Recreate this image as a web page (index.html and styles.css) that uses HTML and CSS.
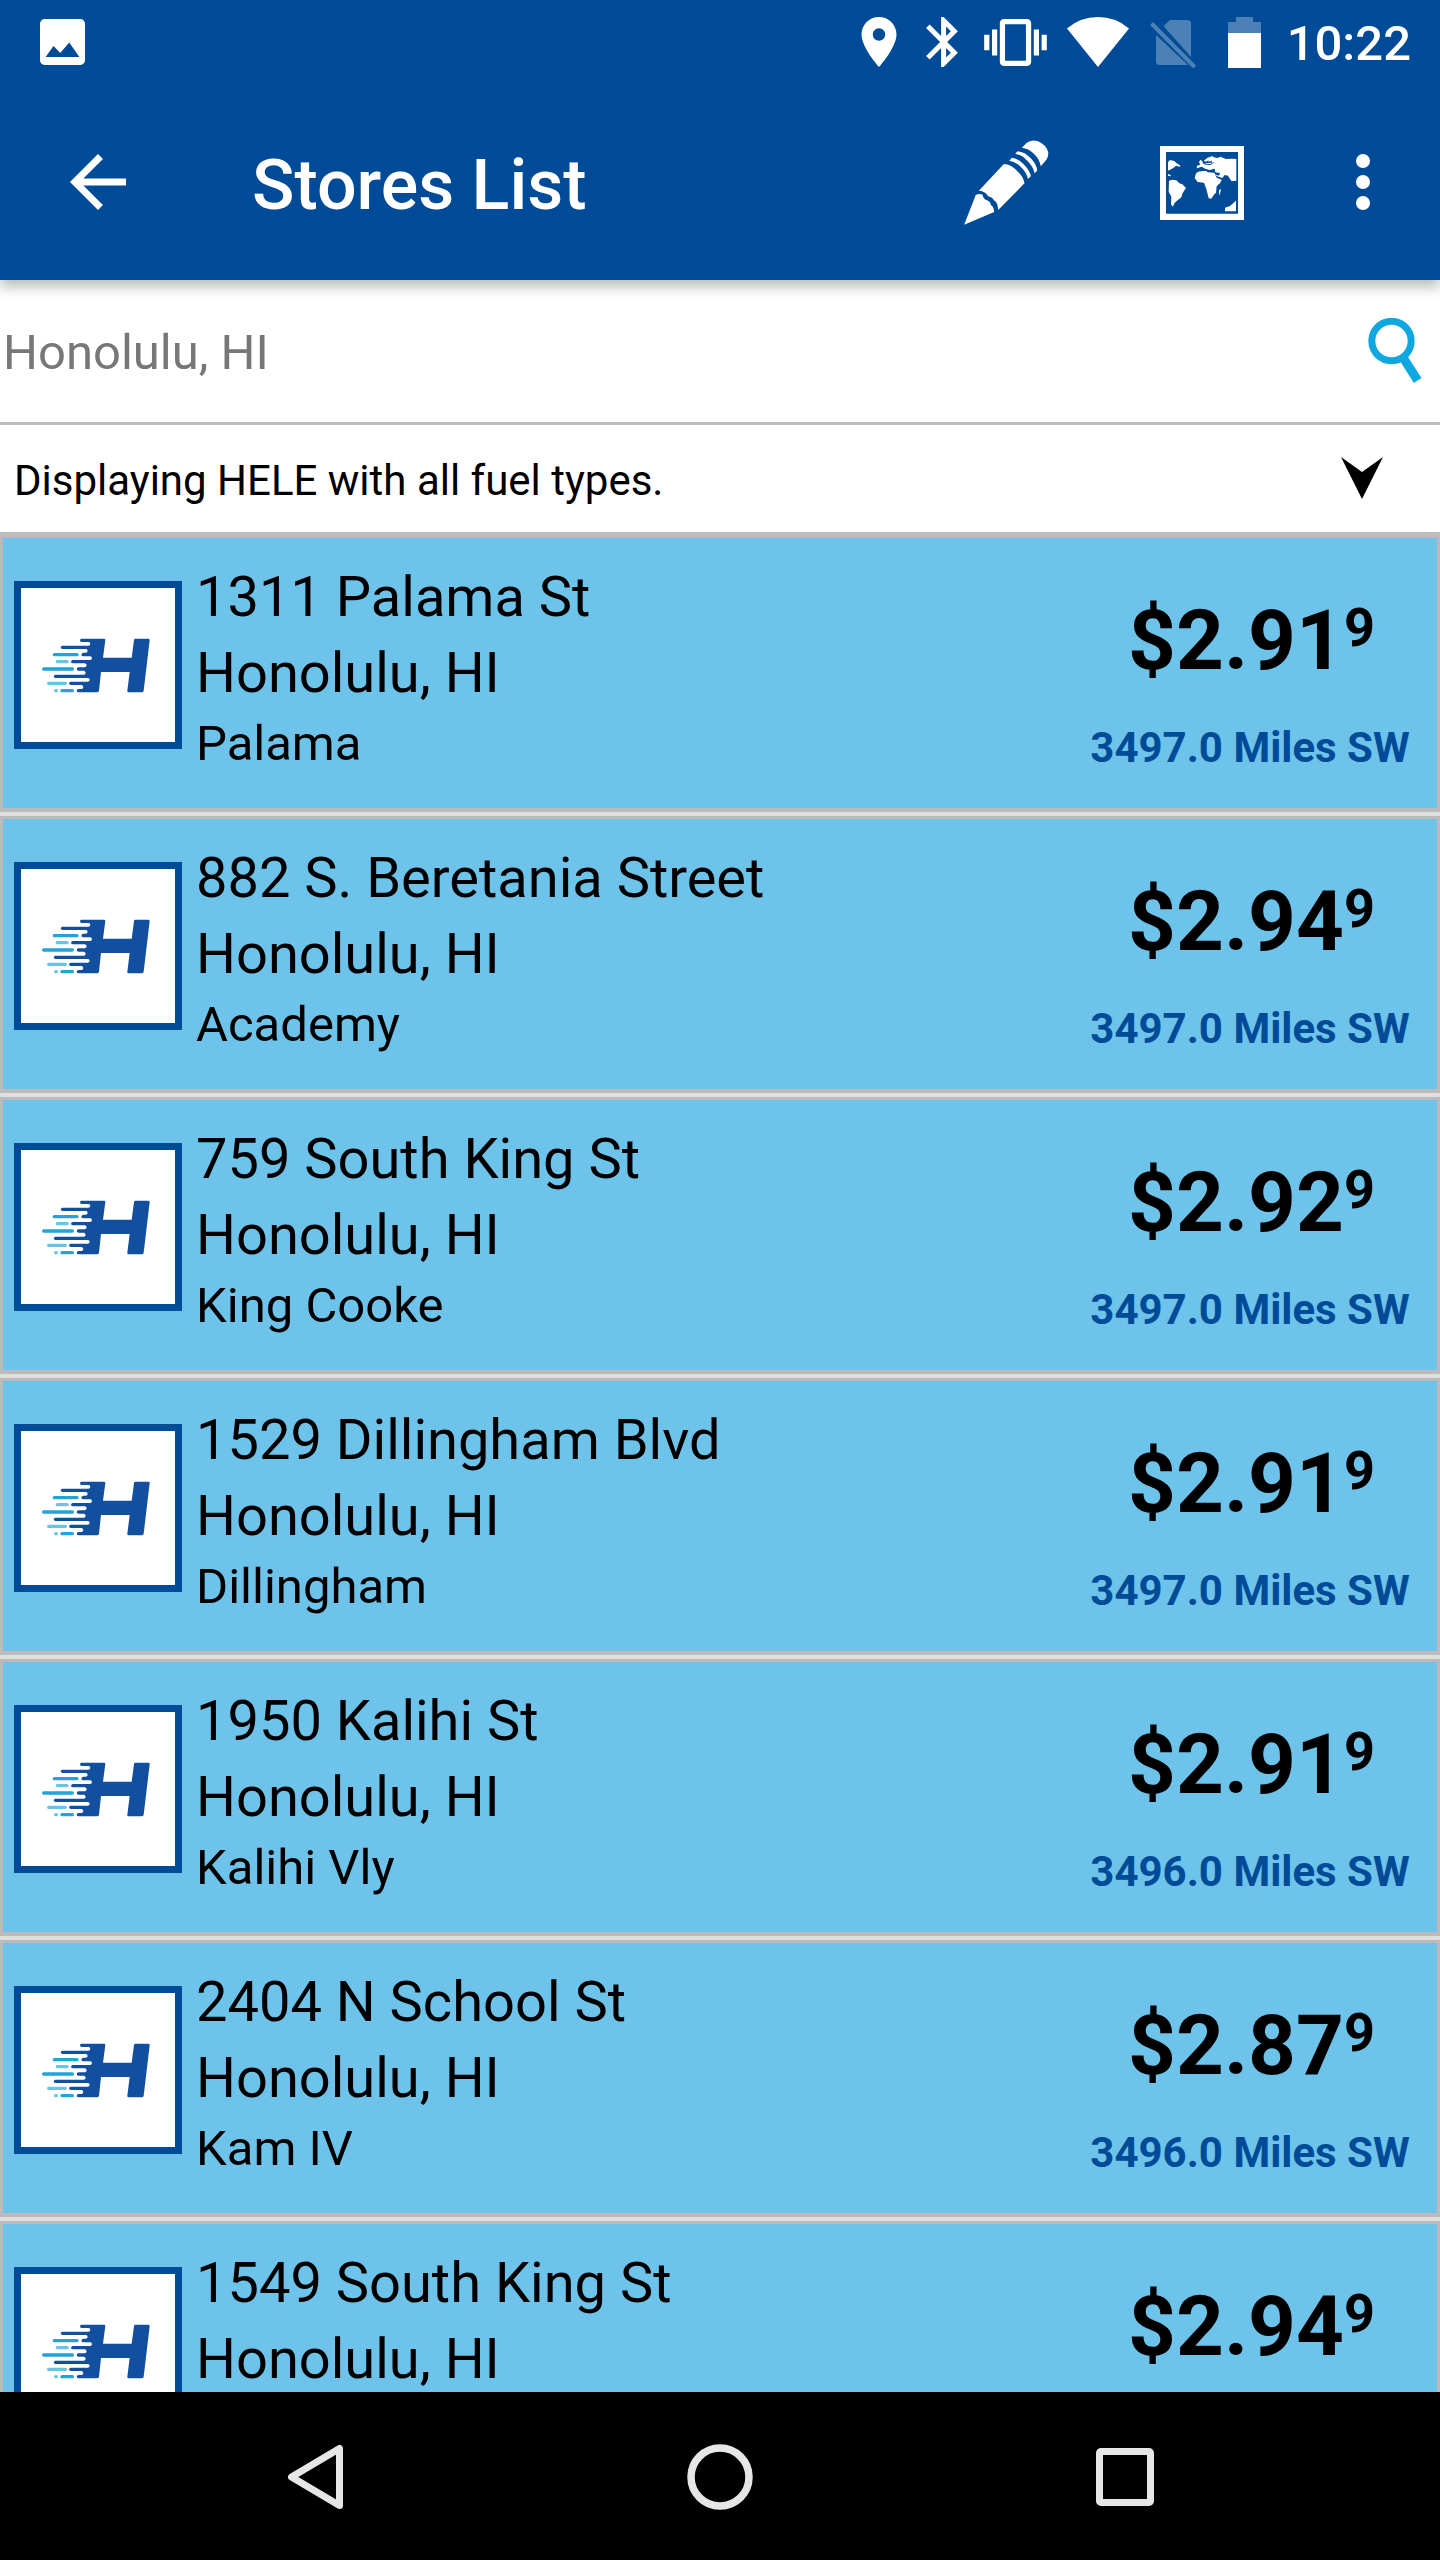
FILE: index.html
```html
<!DOCTYPE html>
<html lang="en">
<head>
  <meta charset="UTF-8">
  <title>Stores List</title>
  <link rel="stylesheet" href="styles.css">
</head>
<body>
  <!-- Brand logo, reused by every store row -->
  <svg class="defs" width="0" height="0">
    <symbol id="logo" viewBox="63 84 462 462">
      <path fill="#134f9f" d="M244 236H312Q316 236 316 240L309 293H395L402 240Q402 236 407 236H445Q450 236 449 241L431 392Q430 397 425 397H386Q381 397 382 392L389 336H303L297 392Q296 397 291 397H235Q230 396 230 392Q231 387 235 387H245Q250 386 250 381Q249 376 245 375H212Q207 374 207 370Q208 366 212 365H264Q269 364 269 359Q268 355 264 354H166Q161 353 161 349Q162 344 166 344H252Q257 343 257 338Q256 333 252 332H235Q230 331 230 327Q231 322 235 322H255Q260 321 260 316Q259 311 255 310H218Q213 309 213 305Q214 301 218 300H271Q276 299 276 294Q275 290 271 289H249Q244 288 244 284Q245 279 249 278H258Q263 277 263 272Q262 268 258 267H187Q182 266 182 262Q183 258 187 257H266Q271 256 271 251Q270 247 266 246H244Q240 245 240 241Q240 236 244 236Z"/>
      <g fill="#22a4da">
        <rect x="158" y="279" width="78" height="10" rx="5"/>
        <rect x="126" y="322" width="96" height="10" rx="5"/>
        <rect x="181" y="387" width="41" height="10" rx="5"/>
      </g>
      <g fill="#6bc3e3">
        <rect x="167" y="300" width="39" height="10" rx="5"/>
        <rect x="141" y="365" width="60" height="10" rx="5"/>
        <rect x="162" y="387" width="12" height="10" rx="5"/>
      </g>
    </symbol>
  </svg>

  <div class="screen">
    <header class="header">
      <!-- Status bar -->
      <div class="status-bar">
        <svg class="icon-picture" width="45" height="46" viewBox="0 0 40 46" preserveAspectRatio="none">
          <path fill="#fff" fill-rule="evenodd" d="M4 0h32a4 5 0 0 1 4 5v36a4 5 0 0 1-4 5H4a4 5 0 0 1-4-5V5a4 5 0 0 1 4-5zM5 38h30L26 23.500 18 34 12 27z"/>
        </svg>
        <div class="status-icons">
          <svg class="icon-location" width="36" height="50" viewBox="5 2 14 20">
            <path fill="#fff" d="M12 2C8.130 2 5 5.130 5 9c0 5.250 7 13 7 13s7-7.750 7-13c0-3.870-3.130-7-7-7zm0 9.500a2.500 2.500 0 1 1 0-5 2.500 2.500 0 0 1 0 5z"/>
          </svg>
          <svg class="icon-bluetooth" width="32" height="50" viewBox="5 2 12.710 20">
            <path fill="#fff" d="M17.710 7.710L12 2h-1v7.590L6.410 5 5 6.410 10.590 12 5 17.590 6.410 19 11 14.410V22h1l5.710-5.710-4.300-4.290 4.300-4.290zM13 5.830l1.880 1.880L13 9.590V5.830zm1.880 10.460L13 18.170v-3.760l1.880 1.880z"/>
          </svg>
          <svg class="icon-vibrate" width="63" height="47" viewBox="0 3 24 18">
            <path fill="#fff" d="M0 15h2V9H0v6zm3 2h2V7H3v10zm19-8v6h2V9h-2zm-3 8h2V7h-2v10zM16.500 3h-9C6.670 3 6 3.670 6 4.500v15c0 .83.67 1.500 1.500 1.500h9c.83 0 1.500-.67 1.500-1.500v-15c0-.83-.67-1.500-1.500-1.500zM16 19H8V5h8v14z"/>
          </svg>
          <svg class="icon-wifi" width="62" height="50" viewBox="0 0 62 50">
            <path fill="#fff" d="M31 50L0 11.500Q13 0 31 0T62 11.500z"/>
          </svg>
          <!-- No SIM: card with a gap on the lower side of the slash -->
          <svg class="icon-sim" width="46" height="49" viewBox="0 0 46 49">
            <path fill="#4d81b5" d="M20 0H37Q41 0 41 4V37L13.500 6zM6 15L38 45H10Q6 45 6 41zM3 2L46 45.500 43.200 48.500 0 5z"/>
          </svg>
          <svg class="icon-battery" width="33" height="51" viewBox="0 0 33 51">
            <path fill="#4d81b5" d="M8 0h17v5h8v12H0V5h8z"/>
            <path fill="#fff" d="M0 16h33v35H0z"/>
          </svg>
          <span class="clock">10:22</span>
        </div>
      </div>

      <!-- Toolbar -->
      <div class="toolbar">
        <svg class="icon-back" width="56" height="56" viewBox="4 4 16 16">
          <path fill="#fff" d="M20 11H7.830l5.590-5.590L12 4l-8 8 8 8 1.410-1.410L7.830 13H20v-2z"/>
        </svg>
        <h1 class="title">Stores List</h1>
        <svg class="icon-edit" width="85" height="85" viewBox="132 88 254 255">
          <g fill="#fff">
            <path d="M132 342L167 252Q180 248 187 252Q189 264 200 269Q211 272 212 283Q221 288 222 304z"/>
            <path d="M176 240L251 160Q272 160 291 181Q310 198 313 218L234 298Q233 275 221 269Q218 260 204 257Q197 242 176 240z"/>
            <path d="M267 150L275 141Q294 143 312 162Q330 181 332 197L323 205Q320 186 302 169Q285 152 267 150z"/>
            <path d="M285 130L292 122Q314 124 332 143Q350 163 351 180L343 188Q340 168 321 150Q304 132 285 130z"/>
            <path d="M305 111L319 97Q334 85 354 92Q377 102 384 124Q386 137 378 148L362 167Q358 145 341 129Q325 113 305 111z"/>
          </g>
        </svg>
        <svg class="icon-map" width="84" height="74" viewBox="60 47 252 222">
          <g fill="#fff">
            <path fill-rule="evenodd" d="M60 47H312V269H60zM78 65V250H294V65z"/>
            <path d="M84 95L90 89 103 92 108 97 122 106 119 109 108 106 101 112 96 115 84 121z"/>
            <path d="M84 131L92 134 92 138 84 136z"/>
            <path d="M87 151L97 148 109 150 118 159 127 162 138 173 128 188 124 201 111 211 103 219 99 229 93 222 94 199 86 184z"/>
            <path d="M168 129Q174 123 184 123L198 121 203 126 223 127 230 142 245 148 241 157 230 168 228 187 221 194 214 205 206 204 199 176 192 157 173 155 164 143z"/>
            <path d="M237 180L242 176 242 184 237 196z"/>
            <path d="M170 115L171 106 181 103 177 96 181 88 187 93 190 101 201 98 215 97 216 91 205 94 206 90 198 94 191 91 203 82 217 77 221 81 233 83 241 79 258 86 277 85 289 86 289 151 275 153 268 143 264 136 254 134 247 143 231 138 224 132 236 136 241 129 226 126 224 116 209 119 195 115 186 109z"/>
            <path d="M255 232L270 227 288 211V243H255z"/>
          </g>
          <path fill="none" stroke="#004b97" stroke-width="3" d="M168 116L183 112 195 119 210 122 224 117M193 101L211 103 221 96"/>
        </svg>
        <svg class="icon-more" width="14" height="56" viewBox="0 0 14 56">
          <g fill="#fff">
            <circle cx="7" cy="7" r="7"/>
            <circle cx="7" cy="28" r="7"/>
            <circle cx="7" cy="49" r="7"/>
          </g>
        </svg>
      </div>
    </header>

    <!-- Search -->
    <div class="search-bar">
      <span class="search-text">Honolulu, HI</span>
      <svg class="icon-search" width="54" height="65" viewBox="505 143 161 195">
        <circle cx="575" cy="212" r="59" fill="none" stroke="#0ea7e0" stroke-width="21"/>
        <path fill="#0ea7e0" d="M599 270L624 259 665 323 642 338z"/>
      </svg>
    </div>

    <!-- Filter -->
    <div class="filter-bar">
      <span class="filter-text">Displaying HELE with all fuel types.</span>
      <svg class="icon-down" width="42" height="42" viewBox="0 0 42 42">
        <path d="M0 0L21 15 42 0 21 42z"/>
      </svg>
    </div>

    <!-- Stores -->
    <main class="store-list">
      <div class="store">
        <svg class="logo"><use href="#logo"/></svg>
        <div class="info">
          <div class="address">1311 Palama St</div>
          <div class="address">Honolulu, HI</div>
          <div class="name">Palama</div>
        </div>
        <div class="price-box">
          <div class="price">$2.91<span class="tenth">9</span></div>
          <div class="distance">3497.0 Miles SW</div>
        </div>
      </div>

      <div class="store">
        <svg class="logo"><use href="#logo"/></svg>
        <div class="info">
          <div class="address">882 S. Beretania Street</div>
          <div class="address">Honolulu, HI</div>
          <div class="name">Academy</div>
        </div>
        <div class="price-box">
          <div class="price">$2.94<span class="tenth">9</span></div>
          <div class="distance">3497.0 Miles SW</div>
        </div>
      </div>

      <div class="store">
        <svg class="logo"><use href="#logo"/></svg>
        <div class="info">
          <div class="address">759 South King St</div>
          <div class="address">Honolulu, HI</div>
          <div class="name">King Cooke</div>
        </div>
        <div class="price-box">
          <div class="price">$2.92<span class="tenth">9</span></div>
          <div class="distance">3497.0 Miles SW</div>
        </div>
      </div>

      <div class="store">
        <svg class="logo"><use href="#logo"/></svg>
        <div class="info">
          <div class="address">1529 Dillingham Blvd</div>
          <div class="address">Honolulu, HI</div>
          <div class="name">Dillingham</div>
        </div>
        <div class="price-box">
          <div class="price">$2.91<span class="tenth">9</span></div>
          <div class="distance">3497.0 Miles SW</div>
        </div>
      </div>

      <div class="store">
        <svg class="logo"><use href="#logo"/></svg>
        <div class="info">
          <div class="address">1950 Kalihi St</div>
          <div class="address">Honolulu, HI</div>
          <div class="name">Kalihi Vly</div>
        </div>
        <div class="price-box">
          <div class="price">$2.91<span class="tenth">9</span></div>
          <div class="distance">3496.0 Miles SW</div>
        </div>
      </div>

      <div class="store">
        <svg class="logo"><use href="#logo"/></svg>
        <div class="info">
          <div class="address">2404 N School St</div>
          <div class="address">Honolulu, HI</div>
          <div class="name">Kam IV</div>
        </div>
        <div class="price-box">
          <div class="price">$2.87<span class="tenth">9</span></div>
          <div class="distance">3496.0 Miles SW</div>
        </div>
      </div>

      <!-- Cut off by the navigation bar -->
      <div class="store">
        <svg class="logo"><use href="#logo"/></svg>
        <div class="info">
          <div class="address">1549 South King St</div>
          <div class="address">Honolulu, HI</div>
        </div>
        <div class="price-box">
          <div class="price">$2.94<span class="tenth">9</span></div>
        </div>
      </div>
    </main>

    <!-- Navigation bar -->
    <nav class="nav-bar">
      <div class="nav-button">
        <svg width="56" height="66" viewBox="0 0 56 66">
          <path fill="none" stroke="#e6e6e6" stroke-width="7" stroke-linejoin="round" d="M52.500 4.500V61.500L4.500 33z"/>
        </svg>
      </div>
      <div class="nav-button">
        <svg width="66" height="66" viewBox="0 0 66 66">
          <circle cx="33" cy="33" r="29" fill="none" stroke="#e6e6e6" stroke-width="7.500"/>
        </svg>
      </div>
      <div class="nav-button">
        <svg width="58" height="58" viewBox="0 0 58 58">
          <rect x="3.500" y="3.500" width="51" height="51" rx="1.500" fill="none" stroke="#e6e6e6" stroke-width="7"/>
        </svg>
      </div>
    </nav>
  </div>
</body>
</html>
```
FILE: styles.css
```css
* {
  box-sizing: border-box;
}

body {
  margin: 0;
  font-family: Roboto, "Liberation Sans", sans-serif;
  color: #000;
  background: #fff;
}

svg {
  display: block;
  flex-shrink: 0;
}

.defs {
  position: absolute;
}

.screen {
  display: flex;
  flex-direction: column;
  width: 1440px;
  height: 2560px;
  overflow: hidden;
}

/* ========== HEADER ========== */
.header {
  position: relative;
  z-index: 1;
  flex: none;
  height: 280px;
  background: #004b97;
  color: #fff;
  box-shadow: 0 7px 12px rgba(0, 20, 0, 0.28);
}

.status-bar {
  display: flex;
  justify-content: space-between;
  height: 84px;
  padding: 0 29px 0 40px;
}

.icon-picture {
  margin-top: 19px;
}

.status-icons {
  display: flex;
  align-items: center;
}

.icon-bluetooth {
  margin-left: 29px;
}

.icon-vibrate {
  margin-left: 26px;
}

.icon-wifi {
  margin-left: 20px;
}

.icon-sim {
  margin: 4px 0 0 21px;
}

.icon-battery {
  margin-left: 32px;
}

.clock {
  margin: 4px 0 0 26px;
  font-size: 49px;
  font-weight: 500;
  line-height: 58px;
}

.toolbar {
  display: flex;
  align-items: center;
  height: 196px;
  padding: 0 70px;
}

.title {
  flex: 1;
  margin: 5px 0 0 126px;
  font-size: 70px;
  font-weight: 500;
  line-height: 84px;
}

.icon-edit {
  margin-right: 111px;
}

.icon-map {
  margin: 2px 112px 0 0;
}

/* ========== SEARCH AND FILTER ========== */
.search-bar {
  display: flex;
  align-items: center;
  justify-content: space-between;
  flex: none;
  height: 145px;
  padding: 0 18px 0 3px;
  border-bottom: 3px solid #bcbcbc;
}

.search-text {
  margin-top: 4px;
  font-size: 49px;
  line-height: 60px;
  color: #777;
}

.icon-search {
  margin-bottom: 2px;
}

.filter-bar {
  display: flex;
  align-items: center;
  justify-content: space-between;
  flex: none;
  height: 110px;
  padding: 0 57px 0 14px;
  border-bottom: 3px solid #bdbdbd;
}

.filter-text {
  margin-top: 5px;
  font-size: 42px;
  line-height: 50px;
}

.icon-down {
  margin-bottom: 1px;
}

/* ========== STORE LIST ========== */
.store-list {
  display: flex;
  flex-direction: column;
  gap: 4px;
  flex: 1;
  min-height: 0;
  overflow: hidden;
  background: #dde0dc;
}

.store {
  display: flex;
  flex: none;
  height: 277px;
  padding: 21px 27px 0 11px;
  background: #6dc3e9;
  border: 3px solid #bcbabb;
  border-bottom-width: 4px;
}

.logo {
  width: 168px;
  height: 168px;
  margin-top: 22px;
  border: 7px solid #004b97;
  background: #fff;
}

.info {
  flex: 1;
  padding-left: 14px;
}

.address {
  font-size: 56px;
  line-height: 76px;
}

.name {
  padding-top: 1px;
  font-size: 49px;
  line-height: 64px;
}

.price-box {
  display: flex;
  flex-direction: column;
  align-items: center;
  width: 320px;
  padding-top: 33px;
  font-weight: 700;
}

.price {
  display: flex;
  padding-left: 3px;
  font-size: 83.5px;
  line-height: 98px;
}

.tenth {
  margin-top: -13px;
  font-size: 54px;
}

.distance {
  margin-top: 33px;
  font-size: 42px;
  line-height: 50px;
  color: #004b97;
  white-space: nowrap;
}

/* ========== NAVIGATION BAR ========== */
.nav-bar {
  display: flex;
  justify-content: center;
  flex: none;
  height: 168px;
  padding-top: 1px;
  background: #000;
}

.nav-button {
  display: flex;
  align-items: center;
  justify-content: center;
  width: 405px;
}
```
